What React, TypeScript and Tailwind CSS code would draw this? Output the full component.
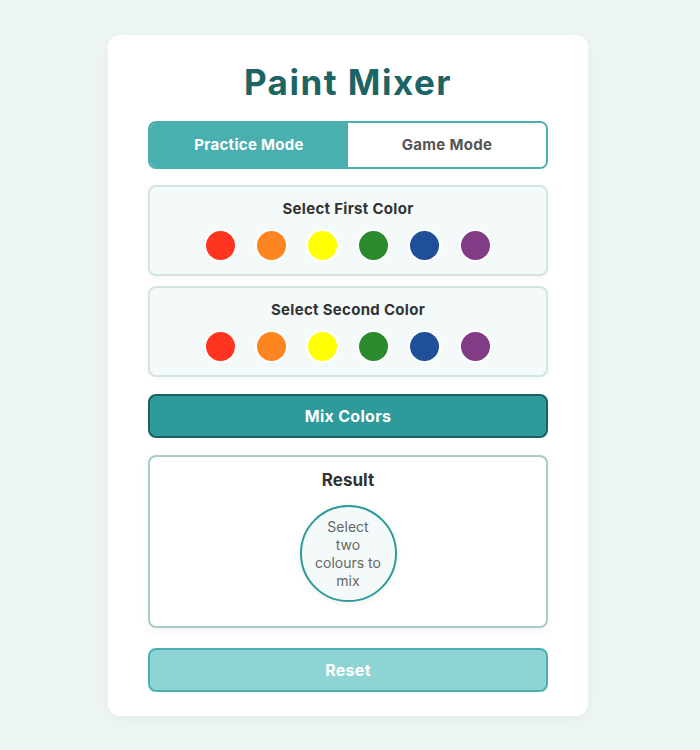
import React from "react";

const colors = ["#ff3520", "#ff8520", "#ffff00", "#2a8a2e", "#1f4f99", "#823c85"];

function Palette({ title }: { title: string }) {
  return (
    <div className="rounded-lg border-2 border-[#d0e4e4] bg-[#f4fafa] pt-[13px] pb-[12px] shadow-[0_2px_6px_rgba(0,0,0,0.04)]">
      <div className="text-center text-[15px] font-bold text-[#333] leading-[18px] tracking-[0.3px]">{title}</div>
      <div className="mt-[11px] flex justify-center gap-[18px]">
        {colors.map((c) => (
          <div
            key={c}
            className="h-[33px] w-[33px] rounded-full border-2 border-white"
            style={{ backgroundColor: c }}
          />
        ))}
      </div>
    </div>
  );
}

export default function App() {
  return (
    <div
      className="min-h-[750px] bg-[#eef6f5] pt-[35px]"
      style={{ fontFamily: "Inter, 'Noto Sans', sans-serif" }}
    >
      <div className="ml-[108px] w-[480px] rounded-xl bg-white px-[40px] pt-[22px] pb-[24px] shadow-[0_4px_16px_rgba(0,80,80,0.06)]">
        <h1 className="text-center text-[35px] font-bold leading-[50px] tracking-[1.5px] text-[#1d6565]">
          Paint Mixer
        </h1>
        <div className="mt-[14px] flex h-[48px] overflow-hidden rounded-lg border-2 border-[#4aafaf]">
          <div className="flex flex-1 items-center justify-center bg-[#4aafaf] text-[15px] font-bold tracking-[0.3px] text-white">
            Practice Mode
          </div>
          <div className="flex flex-1 items-center justify-center bg-white text-[15px] font-bold tracking-[0.3px] text-[#555]">
            Game Mode
          </div>
        </div>
        <div className="mt-[16px] flex flex-col gap-[10px]">
          <Palette title="Select First Color" />
          <Palette title="Select Second Color" />
        </div>
        <div className="mt-[17px] flex h-[44px] items-center justify-center rounded-lg border-2 border-[#1a6363] bg-[#2e9a9a] text-[16px] font-bold tracking-[0.3px] text-white">
          Mix Colors
        </div>
        <div className="mt-[17px] flex h-[173px] flex-col items-center rounded-lg border-2 border-[#a8cccc] bg-white pt-[11px] shadow-[0_3px_8px_rgba(0,0,0,0.05)]">
          <div className="text-[17px] font-bold leading-[24px] text-[#333]">Result</div>
          <div className="mt-[13px] flex h-[97px] w-[97px] items-center justify-center rounded-full border-2 border-[#2e9a9a] bg-[#f4fafa] px-[12px] text-center text-[14px] leading-[18px] text-[#666] shadow-[0_2px_6px_rgba(0,0,0,0.06)]">
            Select two colours to mix
          </div>
        </div>
        <div className="mt-[20px] flex h-[44px] items-center justify-center rounded-lg border-2 border-[#4aafaf] bg-[#8ed4d4] text-[16px] font-bold tracking-[0.3px] text-white">
          Reset
        </div>
      </div>
    </div>
  );
}
